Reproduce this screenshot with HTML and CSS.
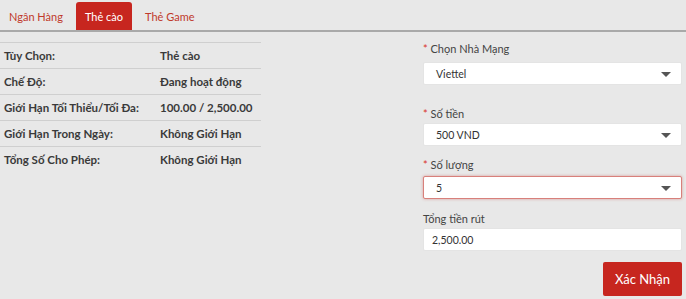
FILE: index.html
```html
<!DOCTYPE html>
<html lang="vi">
<head>
<meta charset="UTF-8">
<meta name="viewport" content="width=device-width, initial-scale=1.0">
<title>Rút tiền - Thẻ cào</title>
<link rel="stylesheet" href="styles.css">
</head>
<body>

<div class="tabs">
  <div class="tab">Ngân Hàng</div>
  <div class="tab active">Thẻ cào</div>
  <div class="tab">Thẻ Game</div>
</div>

<div class="content">
  <div class="info">
    <div class="row"><span class="key">Tùy Chọn:</span><span class="val">Thẻ cào</span></div>
    <div class="row"><span class="key">Chế Độ:</span><span class="val">Đang hoạt động</span></div>
    <div class="row"><span class="key">Giới Hạn Tối Thiểu/Tối Đa:</span><span class="val">100.00 / 2,500.00</span></div>
    <div class="row"><span class="key">Giới Hạn Trong Ngày:</span><span class="val">Không Giới Hạn</span></div>
    <div class="row"><span class="key">Tổng Số Cho Phép:</span><span class="val">Không Giới Hạn</span></div>
  </div>

  <form class="form">
    <div class="field first">
      <label><span class="req">*</span> Chọn Nhà Mạng</label>
      <div class="select">Viettel<span class="caret"></span></div>
    </div>
    <div class="field second">
      <label><span class="req">*</span> Số tiền</label>
      <div class="select">500 VND<span class="caret"></span></div>
    </div>
    <div class="field third">
      <label><span class="req">*</span> Số lượng</label>
      <div class="select error">5<span class="caret"></span></div>
    </div>
    <div class="field fourth">
      <label>Tổng tiền rút</label>
      <div class="input">2,500.00</div>
    </div>
    <div class="actions">
      <button type="button" class="btn">Xác Nhận</button>
    </div>
  </form>
</div>

</body>
</html>
```

FILE: styles.css
```css
body {
  margin: 0;
  font-family: Lato, "Noto Sans", sans-serif;
  font-size: 11px;
  background-color: #e8e8e8;
  color: #333;
}

.tabs {
  display: flex;
  gap: 4px;
  height: 28px;
  padding-top: 2px;
  border-bottom: 2px solid #a9a9a9;
}

.tab {
  display: flex;
  align-items: center;
  padding: 0 9px;
  color: #c0392b;
  font-size: 11px;
  border-radius: 3px 3px 0 0;
}

.tab:first-child {
  padding-left: 9px;
}

.tab.active {
  background-color: #c7261f;
  color: #fff;
}

.content {
  display: flex;
  justify-content: space-between;
  padding-right: 4px;
}

.info {
  width: 261px;
  margin-top: 10px;
}

.row {
  display: flex;
  align-items: center;
  height: 25px;
  border-top: 1px solid #cfcfcf;
  padding-left: 4px;
  font-size: 11.5px;
  font-weight: bold;
  color: #3a3a3a;
}

.row .key {
  width: 156px;
}

.form {
  width: 259px;
  display: flex;
  flex-direction: column;
  margin: 0;
}

.field label {
  display: block;
  color: #444;
  font-size: 11px;
  line-height: 14px;
}

.req {
  color: #d9322b;
}

.field.first { margin-top: 10px; }
.field.first label { margin-bottom: 6px; }
.field.second { margin-top: 22px; }
.field.second label { margin-bottom: 2px; }
.field.third { margin-top: 12px; }
.field.third label { margin-bottom: 4px; }
.field.fourth { margin-top: 13px; }
.field.fourth label { margin-bottom: 2px; }

.select,
.input {
  position: relative;
  box-sizing: border-box;
  height: 23px;
  display: flex;
  align-items: center;
  padding-left: 12px;
  background-color: #fff;
  border: 1px solid #e4e4e4;
  border-radius: 2px;
  color: #333;
  font-size: 10.5px;
}

.input {
  padding-left: 8px;
}

.select.error {
  border-color: #d8807b;
  box-shadow: 0 0 3px rgba(200, 60, 50, 0.45);
}

.caret {
  position: absolute;
  right: 10px;
  top: 9px;
  width: 0;
  height: 0;
  border-left: 5px solid transparent;
  border-right: 5px solid transparent;
  border-top: 5px solid #555;
}

.actions {
  display: flex;
  justify-content: flex-end;
  margin-top: 11px;
}

.btn {
  width: 79px;
  height: 34px;
  border: none;
  border-radius: 2px;
  background-color: #c7261f;
  color: #fff;
  font-family: Lato, "Noto Sans", sans-serif;
  font-size: 13px;
  cursor: pointer;
}
```
